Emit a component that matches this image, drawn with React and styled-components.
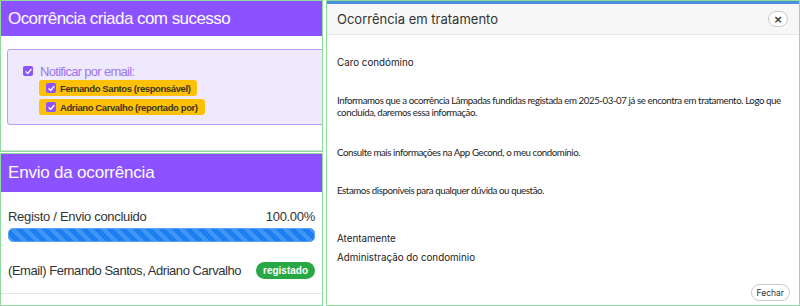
import React from 'react';
import styled, { createGlobalStyle } from 'styled-components';

const GlobalStyle = createGlobalStyle`
  html, body {
    margin: 0;
    padding: 0;
    background: #ffffff;
  }
  body {
    font-family: 'Liberation Sans', Arial, sans-serif;
  }
`;

export const Page = styled.div`
  width: 800px;
  height: 306px;
  display: flex;
  gap: 3px;
  overflow: hidden;
`;

export const LeftColumn = styled.div`
  width: 323px;
  display: flex;
  flex-direction: column;
  gap: 1px;
`;

export const Panel = styled.section`
  border: 1px solid #8fdc9f;
  height: ${p => p.h}px;
  box-sizing: border-box;
  overflow: hidden;
  display: flex;
  flex-direction: column;
  background: #fff;
`;

export const PurpleHeader = styled.div`
  background: #8c52ff;
  color: #fdfbff;
  height: ${p => p.h}px;
  display: flex;
  align-items: center;
  padding: 0 7px;
  font-size: 17px;
  letter-spacing: ${p => p.ls || '-0.3px'};
  flex-shrink: 0;
`;

export const NotifyBox = styled.div`
  margin: 13px 0 0 6px;
  width: 340px;
  height: 76px;
  box-sizing: border-box;
  background: #efe9fe;
  border: 1px solid #b89ef6;
  border-radius: 3px;
  padding: 15px 15px;
  display: flex;
  flex-direction: column;
  gap: 3px;
`;

export const MainCheck = styled.label`
  display: flex;
  align-items: center;
  gap: 7px;
  color: #9d74f4;
  font-size: 13px;
  letter-spacing: -0.7px;
  height: 12px;
`;

export const Box = styled.span`
  width: ${p => p.s}px;
  height: ${p => p.s}px;
  border-radius: 2px;
  background: #8c52ff;
  display: inline-flex;
  align-items: center;
  justify-content: center;
  flex-shrink: 0;
`;

export const ChipList = styled.div`
  display: flex;
  flex-direction: column;
  gap: 3px;
  padding-left: 16px;
`;

export const Chip = styled.div`
  align-self: flex-start;
  background: #ffc107;
  border-radius: 3px;
  height: 16px;
  display: flex;
  align-items: center;
  gap: 4px;
  padding: 0 7px;
  font-size: 9.5px;
  font-weight: bold;
  color: #3b3420;
  letter-spacing: -0.4px;
`;

export const Separator = styled.div`
  margin-top: auto;
  border-bottom: 1px solid #d7dcd9;
`;

export const SendBody = styled.div`
  padding: 17px 7px 0 7px;
  display: flex;
  flex-direction: column;
`;

export const ProgressLabel = styled.div`
  display: flex;
  justify-content: space-between;
  font-size: 13px;
  color: #333;
  letter-spacing: -0.3px;
  height: 16px;
  line-height: 16px;
`;

export const ProgressTrack = styled.div`
  margin-top: 3px;
  height: 14px;
  border-radius: 5px;
  background-color: #1b7ff2;
  background-image: linear-gradient(
    45deg,
    rgba(255, 255, 255, 0.17) 25%,
    transparent 25%,
    transparent 50%,
    rgba(255, 255, 255, 0.17) 50%,
    rgba(255, 255, 255, 0.17) 75%,
    transparent 75%,
    transparent
  );
  background-size: 13px 13px;
  border: 1px solid #5aa3f6;
  box-sizing: border-box;
`;

export const RecipientRow = styled.div`
  margin: 20px -7px 0 -7px;
  padding: 0 7px 14px 7px;
  display: flex;
  align-items: center;
  justify-content: space-between;
  font-size: 13px;
  color: #333;
  letter-spacing: -0.45px;
  border-bottom: 1px solid #e6e6e6;
`;

export const Badge = styled.span`
  background: #28a745;
  color: #fff;
  font-weight: bold;
  font-size: 10px;
  border-radius: 9px;
  height: 17px;
  padding: 0 7px;
  display: inline-flex;
  align-items: center;
  letter-spacing: 0;
`;

export const Modal = styled.section`
  flex: 1;
  border: 1px solid #8fdc9f;
  box-sizing: border-box;
  height: 306px;
  display: flex;
  flex-direction: column;
`;

export const ModalHeader = styled.div`
  border-top: 3px solid #4a90dc;
  background: #f7f7f7;
  border-bottom: 1px solid #e8e8ea;
  height: 30px;
  display: flex;
  align-items: center;
  justify-content: space-between;
  padding: 0 11px 0 10px;
  font-family: Inter, 'Open Sans', sans-serif;
  font-size: 13px;
  color: #333;
`;

export const CloseButton = styled.button`
  width: 20px;
  height: 16px;
  border: 1px solid #c9c9c9;
  border-radius: 8px;
  background: #fff;
  padding: 0;
  display: flex;
  align-items: center;
  justify-content: center;
  font-size: 11px;
  font-weight: bold;
  color: #333;
  line-height: 1;
  font-family: 'DejaVu Sans', sans-serif;
`;

export const ModalBody = styled.div`
  flex: 1;
  padding: 22px 10px 0 10px;
  display: flex;
  flex-direction: column;
`;

export const Para = styled.p`
  margin: ${p => p.mt || 0}px 0 0 0;
  font-size: ${p => (p.geo ? '9.8px' : '9.7px')};
  line-height: 12px;
  font-family: ${p => (p.geo ? "Inter, 'Open Sans', sans-serif" : "Lato, 'Open Sans', sans-serif")};
  color: #222;
  letter-spacing: ${p => (p.geo ? '0' : '-0.42px')};
`;

export const ModalFooter = styled.div`
  display: flex;
  justify-content: flex-end;
  padding: 0 9px 4px 0;
`;

export const FecharButton = styled.button`
  height: 17px;
  padding: 0 5px;
  border: 1px solid #c9c9c9;
  border-radius: 9px;
  background: #fff;
  font-family: Inter, 'Open Sans', sans-serif;
  font-size: 8.5px;
  color: #333;
`;

const Tick = ({ size }) => (
  <svg width={size} height={size} viewBox="0 0 16 16">
    <path d="M3.5 8.5l3 3 6-7" fill="none" stroke="#fff" strokeWidth="2.4" strokeLinecap="round" strokeLinejoin="round" />
  </svg>
);

const recipients = ['Fernando Santos (responsável)', 'Adriano Carvalho (reportado por)'];

export default function App() {
  return (
    <>
      <GlobalStyle />
      <Page>
        <LeftColumn>
          <Panel h={152}>
            <PurpleHeader h={35} ls="-0.55px">Ocorrência criada com sucesso</PurpleHeader>
            <NotifyBox>
              <MainCheck>
                <Box s={10}><Tick size={9} /></Box>
                Notificar por email:
              </MainCheck>
              <ChipList>
                {recipients.map(r => (
                  <Chip key={r}>
                    <Box s={10}><Tick size={9} /></Box>
                    {r}
                  </Chip>
                ))}
              </ChipList>
            </NotifyBox>
            <Separator />
          </Panel>
          <Panel h={153}>
            <PurpleHeader h={38} ls="-0.2px">Envio da ocorrência</PurpleHeader>
            <SendBody>
              <ProgressLabel>
                <span>Registo / Envio concluido</span>
                <span>100.00%</span>
              </ProgressLabel>
              <ProgressTrack />
              <RecipientRow>
                <span>(Email) Fernando Santos, Adriano Carvalho</span>
                <Badge>registado</Badge>
              </RecipientRow>
            </SendBody>
          </Panel>
        </LeftColumn>
        <Modal>
          <ModalHeader>
            <span>Ocorrência em tratamento</span>
            <CloseButton aria-label="Fechar">×</CloseButton>
          </ModalHeader>
          <ModalBody>
            <Para geo>Caro condómino</Para>
            <Para mt={25}>
              Informamos que a ocorrência Lâmpadas fundidas registada em 2025-03-07 já se encontra em tratamento. Logo que concluída, daremos essa informação.
            </Para>
            <Para mt={28}>Consulte mais informações na App Gecond, o meu condomínio.</Para>
            <Para mt={26}>Estamos disponíveis para qualquer dúvida ou questão.</Para>
            <Para geo mt={37}>Atentamente</Para>
            <Para geo mt={7}>Administração do condominio</Para>
          </ModalBody>
          <ModalFooter>
            <FecharButton>Fechar</FecharButton>
          </ModalFooter>
        </Modal>
      </Page>
    </>
  );
}
